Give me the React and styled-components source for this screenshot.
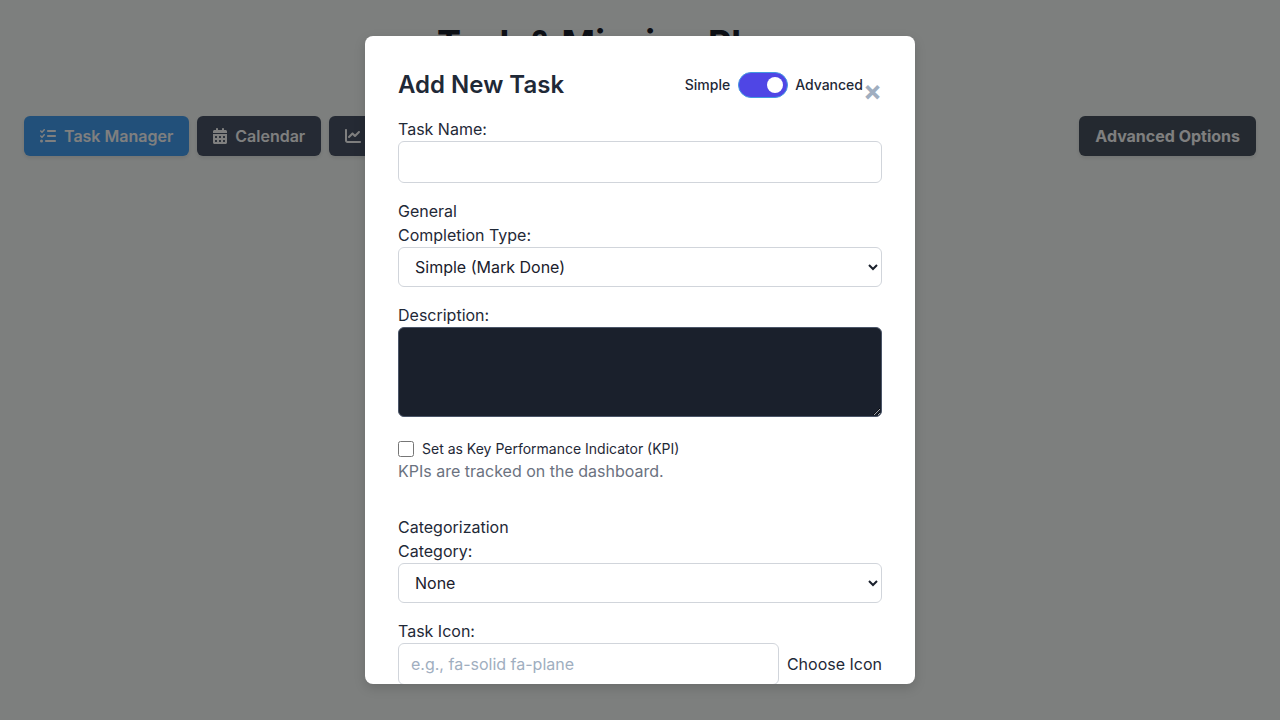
import React from 'react';
import styled, { createGlobalStyle } from 'styled-components';
import { FaListCheck, FaCalendarDays, FaChartLine } from 'react-icons/fa6';

const GlobalStyle = createGlobalStyle`
  * {
    box-sizing: border-box;
  }

  body {
    margin: 0;
    background: #fbfffd;
    color: #1f2937;
    font-family: Inter, "Liberation Sans", sans-serif;
    line-height: 1.5;
  }
`;

const Page = styled.div`
  position: relative;
  height: 720px;
  padding: 16px 24px;
  overflow: hidden;
`;

const PageTitle = styled.h1`
  margin: 0 0 46px;
  height: 54px;
  color: #1a202c;
  font-size: 36px;
  font-weight: 700;
  line-height: 54px;
  text-align: center;
`;

const TabBar = styled.nav`
  display: flex;
  gap: 8px;
  align-items: center;
`;

const TabButton = styled.button`
  display: flex;
  align-items: center;
  gap: 8px;
  height: 40px;
  padding: 0 16px;
  border: none;
  border-radius: 6px;
  background: ${({ $bg }) => $bg || '#4a5568'};
  color: #fff;
  font-family: inherit;
  font-size: 16px;
  font-weight: 600;
  box-shadow: 0 2px 4px rgba(0, 0, 0, 0.1);
`;

const OptionsButton = styled(TabButton)`
  margin-left: auto;
  font-weight: 700;
`;

const CalendarIcon = styled(FaCalendarDays)`
  width: 14px;
  height: 16px;
`;

const Overlay = styled.div`
  position: absolute;
  inset: 0;
  display: flex;
  align-items: center;
  justify-content: center;
  background: rgba(0, 0, 0, 0.5);
`;

const Modal = styled.div`
  position: relative;
  width: 550px;
  height: 648px;
  padding: 32px 33px;
  overflow: hidden;
  border-radius: 8px;
  background: #fff;
  box-shadow: 0 4px 12px rgba(0, 0, 0, 0.15);
`;

const CloseButton = styled.button`
  position: absolute;
  top: 38px;
  right: 33px;
  padding: 0;
  border: none;
  background: none;
  color: #a0aec0;
  font-family: inherit;
  font-size: 28px;
  font-weight: 700;
  line-height: 34px;
`;

const ModalHeader = styled.div`
  display: flex;
  align-items: center;
  justify-content: space-between;
  height: 34px;
  margin-bottom: 15px;
  padding-right: 19px;
`;

const ModalTitle = styled.h2`
  margin: 0;
  font-size: 24px;
  font-weight: 600;
`;

const ModeSwitch = styled.div`
  display: flex;
  align-items: center;
  gap: 8px;
  font-size: 14px;
  font-weight: 500;
  line-height: 20px;
`;

const Toggle = styled.span`
  position: relative;
  width: 50px;
  height: 26px;
  margin-right: -1px;
  border: 1px solid #4299e1;
  border-radius: 13px;
  background: #4f46e5;

  &::after {
    content: '';
    position: absolute;
    top: 4px;
    right: 4px;
    width: 16px;
    height: 16px;
    border-radius: 50%;
    background: #fff;
  }
`;

const Field = styled.div`
  margin-bottom: 16px;
`;

const Label = styled.label`
  display: block;
  font-size: 16px;
  line-height: 24px;
`;

const GroupName = styled.div`
  font-size: 16px;
  line-height: 24px;
`;

const TextInput = styled.input`
  display: block;
  flex: ${({ $grow }) => ($grow ? '1' : 'none')};
  width: ${({ $grow }) => ($grow ? 'auto' : '100%')};
  min-width: 0;
  height: 42px;
  padding: 0 12px;
  border: 1px solid #d1d5db;
  border-radius: 6px;
  background: #fff;
  font-family: inherit;
  font-size: 16px;

  &::placeholder {
    color: #a0aec0;
  }
`;

const Select = styled.select`
  display: block;
  width: 100%;
  height: 40px;
  padding: 0 12px;
  border: 1px solid #d1d5db;
  border-radius: 6px;
  background: #fff;
  color: #1a202c;
  font-family: inherit;
  font-size: 16px;
`;

const Description = styled.textarea`
  display: block;
  width: 100%;
  height: 90px;
  padding: 8px 12px;
  border: 1px solid #4a5568;
  border-radius: 6px;
  background: #1a202c;
  color: #fff;
  font-family: inherit;
  font-size: 16px;
`;

const CheckRow = styled.label`
  display: flex;
  align-items: center;
  gap: 8px;
  height: 26px;
  padding-top: 5px;
  padding-bottom: 0;
  font-size: 14px;
`;

const Checkbox = styled.input`
  width: 16px;
  height: 16px;
  margin: 1px 0 0;
`;

const Hint = styled.div`
  margin-bottom: 32px;
  color: #6b7280;
  font-size: 16px;
  line-height: 24px;
`;

const IconRow = styled.div`
  display: flex;
  align-items: center;
  gap: 8px;
`;

const LinkButton = styled.button`
  padding: 0;
  border: none;
  background: none;
  color: #1f2937;
  font-family: inherit;
  font-size: 16px;
  white-space: nowrap;
`;

export default function App() {
  return (
    <>
      <GlobalStyle />
      <Page>
        <PageTitle>Task &amp; Mission Planner</PageTitle>
        <TabBar>
          <TabButton $bg="#44a0f4">
            <FaListCheck size={16} />
            Task Manager
          </TabButton>
          <TabButton>
            <CalendarIcon />
            Calendar
          </TabButton>
          <TabButton>
            <FaChartLine size={16} />
            Analytics
          </TabButton>
          <OptionsButton $bg="#485360">Advanced Options</OptionsButton>
        </TabBar>
        <Overlay>
          <Modal>
            <CloseButton aria-label="Close">×</CloseButton>
            <ModalHeader>
              <ModalTitle>Add New Task</ModalTitle>
              <ModeSwitch>
                Simple
                <Toggle />
                Advanced
              </ModeSwitch>
            </ModalHeader>
            <Field>
              <Label>Task Name:</Label>
              <TextInput type="text" />
            </Field>
            <GroupName>General</GroupName>
            <Field>
              <Label>Completion Type:</Label>
              <Select defaultValue="simple">
                <option value="simple">Simple (Mark Done)</option>
              </Select>
            </Field>
            <Field>
              <Label>Description:</Label>
              <Description />
            </Field>
            <CheckRow>
              <Checkbox type="checkbox" />
              Set as Key Performance Indicator (KPI)
            </CheckRow>
            <Hint>KPIs are tracked on the dashboard.</Hint>
            <GroupName>Categorization</GroupName>
            <Field>
              <Label>Category:</Label>
              <Select defaultValue="none">
                <option value="none">None</option>
              </Select>
            </Field>
            <Field>
              <Label>Task Icon:</Label>
              <IconRow>
                <TextInput $grow type="text" placeholder="e.g., fa-solid fa-plane" />
                <LinkButton>Choose Icon</LinkButton>
              </IconRow>
            </Field>
          </Modal>
        </Overlay>
      </Page>
    </>
  );
}
